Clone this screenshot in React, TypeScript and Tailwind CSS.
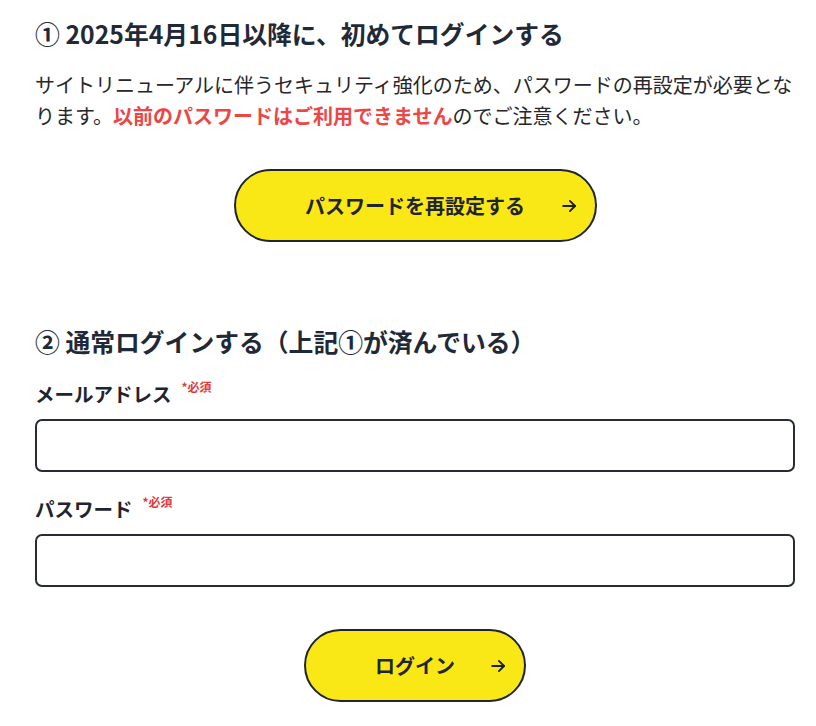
import React from "react";

const Arrow = () => (
  <svg width="19" height="19" viewBox="0 0 24 24" fill="none" stroke="#1a1f2b" strokeWidth="2.3" strokeLinecap="round" strokeLinejoin="round">
    <path d="M4 12h15" />
    <path d="M12.5 5.5l6.5 6.5-6.5 6.5" />
  </svg>
);

const PillButton = ({ label, width }: { label: string; width: string }) => (
  <button
    type="button"
    className={`relative flex h-[73px] items-center justify-center rounded-full border-2 border-[#1f2430] bg-[#f9e816] ${width}`}
  >
    <span className="text-[20px] font-bold leading-none text-[#1f2430]">{label}</span>
    <span className="absolute right-[16px] top-1/2 -translate-y-1/2">
      <Arrow />
    </span>
  </button>
);

const Label = ({ text }: { text: string }) => (
  <div className="flex items-start text-[#1f2430]">
    <span className="text-[19.5px] font-bold leading-[30px]">{text}</span>
    <span className="ml-[10px] mt-[-2px] text-[12px] font-bold leading-[20px] text-[#e0393e]">*必須</span>
  </div>
);

export default function App() {
  return (
    <div className="h-[726px] w-[816px] overflow-hidden bg-white">
      <div
        className="pl-[35px] pr-[21px] pt-[15px] text-[#1f2430]"
        style={{ fontFamily: '"Noto Sans CJK JP", "Noto Sans", sans-serif' }}
      >
        <h2 className="text-[24.8px] font-bold leading-[36px] text-[#1f2937]">① 2025年4月16日以降に、初めてログインする</h2>
        <p className="mt-[18px] text-[20px] leading-[31px] text-[#26262b]">
          サイトリニューアルに伴うセキュリティ強化のため、パスワードの再設定が必要となります。
          <span className="font-bold text-[#ec4646]">以前のパスワードはご利用できません</span>
          のでご注意ください。
        </p>
        <div className="mt-[38px] flex justify-center">
          <PillButton label="パスワードを再設定する" width="w-[363px]" />
        </div>

        <h2 className="mt-[81px] text-[24.8px] font-bold leading-[36px] text-[#1f2937]">② 通常ログインする（上記①が済んでいる）</h2>

        <div className="mt-[20px]">
          <Label text="メールアドレス" />
          <input
            type="email"
            className="mt-[10px] block h-[53px] w-full rounded-[7px] border-2 border-[#262b36] bg-white px-3 outline-none"
          />
        </div>

        <div className="mt-[22px]">
          <Label text="パスワード" />
          <input
            type="password"
            className="mt-[10px] block h-[53px] w-full rounded-[7px] border-2 border-[#262b36] bg-white px-3 outline-none"
          />
        </div>

        <div className="mt-[42px] flex justify-center">
          <PillButton label="ログイン" width="w-[222px]" />
        </div>
      </div>
    </div>
  );
}
